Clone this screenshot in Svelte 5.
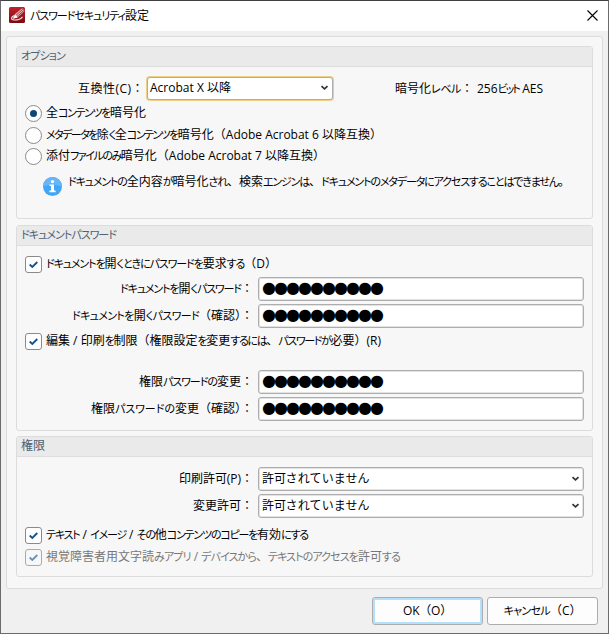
<script>
  let encrypt = 'all';
  let dots = '●'.repeat(10);

  const modes = [
    { id: 'all', text: '全コンテンツを暗号化', width: 100 },
    { id: 'content', text: 'メタデータを除く全コンテンツを暗号化（Adobe Acrobat 6 以降互換）', width: 336 },
    { id: 'attach', text: '添付ファイルのみ暗号化（Adobe Acrobat 7 以降互換）', width: 279 },
  ];

  // kana are set narrower than kanji, so keep them in their own runs
  function runs(text) {
    return text.split(/([ぁ-んァ-ヶー]+)/).filter(Boolean);
  }

  // spread the difference to the wanted width over the kana only
  function fit(node, width) {
    const kana = [...node.querySelectorAll('.kana')];
    const target = kana.length ? kana : [node];
    const count = target.reduce((n, el) => n + el.textContent.length, 0);
    const diff = width - node.getBoundingClientRect().width;
    target.forEach((el) => (el.style.letterSpacing = `${diff / count}px`));
  }
</script>

{#snippet label(text, width)}
  <span class="label" use:fit={width}>{#each runs(text) as run}<span class:kana={/[ぁ-んァ-ヶ]/.test(run)}>{run}</span>{/each}</span>
{/snippet}

{#snippet chevron()}
  <svg class="chevron" width="9" height="6" viewBox="0 0 9 6"><path d="M1.5 1.1 4.5 3.9 7.5 1.1" /></svg>
{/snippet}

{#snippet tick()}
  <span class="box"><svg width="15" height="15" viewBox="0 0 15 15"><path d="M3.7 7.5 6.3 10 11.3 5" /></svg></span>
{/snippet}

<div class="window">
  <header>
    <svg width="16" height="16" viewBox="0 0 16 16">
      <defs>
        <linearGradient id="red" x1="0" y1="0" x2="0" y2="1">
          <stop offset="0" stop-color="#c5202b" />
          <stop offset="1" stop-color="#790b13" />
        </linearGradient>
      </defs>
      <rect width="16" height="16" rx="1.5" fill="url(#red)" />
      <path d="M13.3 1.2 6 7 4.2 11.4 8.6 10.4 15.6 3.8Z" fill="#e3bdbe" />
      <path d="M14.2 2 6.8 8.4M15.2 3.2 8 9.6" stroke="#9c2029" stroke-width=".8" />
      <path d="M6 7.5 3.8 11.8 8.6 10.4Z" fill="#fff" />
      <path d="M5 8.6C1.6 10 1.8 13 5.2 13 9 13 12 12 13.5 9.8" fill="none" stroke="#eed6d7" stroke-width="1.2" />
    </svg>
    <h1>{@render label('パスワードセキュリティ設定', 119)}</h1>
    <svg class="close" width="11" height="11" viewBox="0 0 11 11"><path d="M.5.5 10.5 10.5M10.5.5.5 10.5" /></svg>
  </header>

  <main>
    <section class="options">
      <h2>{@render label('オプション', 44)}</h2>
      <div class="compat">
        <div class="name">{@render label('互換性(C)：', 66)}</div>
        <div class="field focus">{@render label('Acrobat X 以降', 81)}{@render chevron()}</div>
        <div class="level">{@render label('暗号化レベル：', 78)}{@render label('256ビット AES', 66)}</div>
      </div>
      <div class="modes">
        {#each modes as mode}
          <div class="choice">
            <span class="radio" class:on={mode.id === encrypt}></span>
            {@render label(mode.text, mode.width)}
          </div>
        {/each}
      </div>
      <div class="info">
        <svg width="19" height="19" viewBox="0 0 19 19">
          <circle cx="9.5" cy="9.5" r="9.5" fill="#42a5f5" />
          <path d="M0 9.5a9.5 9.5 0 0 1 19 0Q9 6 0 9.5" fill="#64b5f9" />
          <circle cx="9.5" cy="4.6" r="1.7" fill="#fff" />
          <path d="M6.5 7.4H11V13.5H12.6V15.2H6.4V13.5H8V9H6.5Z" fill="#fff" />
        </svg>
        {@render label('ドキュメントの全内容が暗号化され、検索エンジンは、ドキュメントのメタデータにアクセスすることはできません。', 502)}
      </div>
    </section>

    <section class="passwords">
      <h2>{@render label('ドキュメントパスワード', 95)}</h2>
      <div class="choice first">{@render tick()}{@render label('ドキュメントを開くときにパスワードを要求する（D）', 231)}</div>
      <div class="grid">
        <div class="name">{@render label('ドキュメントを開くパスワード：', 133)}</div>
        <div class="field dots">{@render label(dots, 120)}</div>
        <div class="name">{@render label('ドキュメントを開くパスワード（確認）：', 181)}</div>
        <div class="field dots">{@render label(dots, 120)}</div>
      </div>
      <div class="choice second">{@render tick()}{@render label('編集 / 印刷を制限（権限設定を変更するには、パスワードが必要）(R)', 335)}</div>
      <div class="grid">
        <div class="name">{@render label('権限パスワードの変更：', 114)}</div>
        <div class="field dots">{@render label(dots, 120)}</div>
        <div class="name">{@render label('権限パスワードの変更（確認）：', 162)}</div>
        <div class="field dots">{@render label(dots, 120)}</div>
      </div>
    </section>

    <section class="rights">
      <h2>{@render label('権限', 24)}</h2>
      <div class="grid">
        <div class="name">{@render label('印刷許可(P)：', 74)}</div>
        <div class="field">{@render label('許可されていません', 108)}{@render chevron()}</div>
        <div class="name">{@render label('変更許可：', 60)}</div>
        <div class="field">{@render label('許可されていません', 108)}{@render chevron()}</div>
      </div>
      <div class="choice copy">{@render tick()}{@render label('テキスト / イメージ / その他コンテンツのコピーを有効にする', 262)}</div>
      <div class="choice disabled">{@render tick()}{@render label('視覚障害者用文字読みアプリ / デバイスから、テキストのアクセスを許可する', 354)}</div>
    </section>
  </main>

  <footer>
    <button class="default">{@render label('OK（O）', 49)}</button>
    <button>{@render label('キャンセル（C）', 78)}</button>
  </footer>
</div>

<style>
  :global(body) {
    background: #f0f0f0;
  }

  .window {
    box-sizing: border-box;
    width: 609px;
    height: 634px;
    border: 1px solid #6b6b6d;
    border-top-color: #404042;
    background: #f0f0f0;
    color: #000;
    font: 12px/16px "Open Sans", "Noto Sans CJK JP", sans-serif;
    overflow: hidden;
  }

  header {
    display: flex;
    align-items: center;
    height: 30px;
    padding: 0 10px 2px 8px;
    box-sizing: border-box;
    background: #fff;
  }

  h1,
  h2 {
    margin: 0;
    font-size: 12px;
    font-weight: normal;
  }

  h1 {
    flex: 1;
    margin: 2px 0 0 5px;
  }

  .label {
    display: inline-block;
    white-space: pre;
  }

  .kana {
    font-size: 11px;
    font-feature-settings: "palt";
  }

  .field .kana {
    font-size: 12px;
  }

  .close {
    fill: none;
    stroke: #000;
    stroke-width: 1.1;
  }

  main {
    box-sizing: border-box;
    display: flex;
    flex-direction: column;
    gap: 6px;
    width: 597px;
    height: 553px;
    margin: 5px 0 0 5px;
    padding: 9px;
    border: 1px solid #dcdcdc;
    border-radius: 3px;
    background: #f7f7f7;
  }

  section {
    box-sizing: border-box;
    width: 577px;
    border: 1px solid #dcdcdc;
    border-radius: 3px;
  }

  .options {
    height: 173px;
  }

  .passwords {
    height: 206px;
  }

  .rights {
    height: 141px;
    margin-top: -1px;
  }

  h2 {
    height: 19px;
    padding-left: 4px;
    border-bottom: 1px solid #dedede;
    background: #eaeaea;
    color: #4d6173;
    line-height: 18px;
  }

  .compat {
    display: flex;
    align-items: center;
    margin-top: 9px;
  }

  .name {
    width: 236px;
    text-align: right;
  }

  .compat .name {
    width: 127px;
  }

  .field {
    box-sizing: border-box;
    display: flex;
    align-items: center;
    justify-content: space-between;
    width: 326px;
    height: 24px;
    padding: 0 3px 1px;
    border: 1px solid #adadad;
    border-radius: 3px;
    background: #fff;
    box-shadow: inset 0 0 0 1px #e3e3e3;
  }

  .field.focus {
    width: 186px;
    height: 23px;
    margin: 1px 1px 1px 3px;
    padding: 0 3px 1px 2px;
    box-shadow: 0 0 0 1px #efcf83;
  }

  .dots {
    padding: 0 3px 2px;
    font-family: "DejaVu Sans", sans-serif;
    font-size: 16px;
  }

  .chevron {
    fill: none;
    stroke: #333;
    stroke-width: 1.7;
  }

  .level {
    display: flex;
    gap: 4px;
    margin-left: 61px;
  }

  .choice {
    display: flex;
    align-items: center;
    gap: 4px;
    height: 17px;
    padding-left: 8px;
  }

  .choice .label {
    margin-bottom: 1px;
  }

  .modes {
    display: grid;
    gap: 4.5px;
    margin-top: 4px;
  }

  .radio,
  .box {
    box-sizing: border-box;
    display: grid;
    place-items: center;
    width: 17px;
    height: 17px;
    border: 1px solid #8a8a8a;
    border-radius: 50%;
    background: #fff;
  }

  .radio.on::after {
    content: "";
    width: 7px;
    height: 7px;
    border-radius: 50%;
    background: #0b4678;
  }

  .box {
    border-radius: 3px;
  }

  .box path {
    fill: none;
    stroke: #12528a;
    stroke-width: 1.8;
  }

  .info {
    display: flex;
    gap: 6px;
    margin: 12px 0 0 26px;
  }

  .info .label {
    margin-top: -3px;
  }

  .first {
    margin-top: 10px;
  }

  .grid {
    display: grid;
    grid-template-columns: 236px 326px;
    column-gap: 5px;
    row-gap: 3px;
    align-items: center;
    margin-top: 4px;
  }

  .second {
    margin-top: 5px;
  }

  .second + .grid {
    margin-top: 20px;
  }

  .rights .grid {
    margin-top: 10px;
  }

  .copy {
    margin-top: 9px;
  }

  .disabled {
    margin-top: 5px;
    color: #777;
  }

  .disabled .box {
    border-color: #aaa;
    background: #f7f7f7;
  }

  .disabled path {
    stroke: #6891b3;
  }

  footer {
    display: flex;
    justify-content: flex-end;
    gap: 4px;
    margin: 8px 10px 0 0;
  }

  button {
    width: 111px;
    height: 28px;
    padding: 0;
    border: 1px solid #adadad;
    border-radius: 3px;
    background: #fdfdfd;
    color: #000;
    font: inherit;
  }

  .default {
    box-shadow: inset 0 0 0 2px #b4e0fb;
  }
</style>
